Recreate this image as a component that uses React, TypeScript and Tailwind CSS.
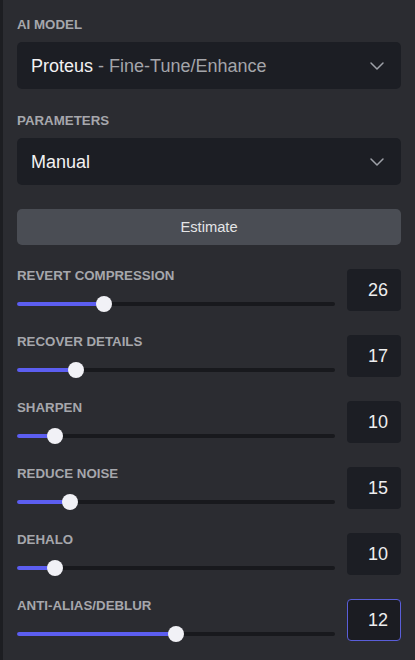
import { ChevronDown } from "lucide-react";

type Param = { label: string; value: number; pct: number; focused?: boolean };

const params: Param[] = [
  { label: "REVERT COMPRESSION", value: 26, pct: 26 },
  { label: "RECOVER DETAILS", value: 17, pct: 17 },
  { label: "SHARPEN", value: 10, pct: 10 },
  { label: "REDUCE NOISE", value: 15, pct: 15 },
  { label: "DEHALO", value: 10, pct: 10 },
  { label: "ANTI-ALIAS/DEBLUR", value: 12, pct: 50, focused: true },
];

function SectionLabel({ children }: { children: string }) {
  return (
    <div className="text-[13.3px] leading-[14px] font-bold text-[#a6a7ac]">{children}</div>
  );
}

function Select({ children }: { children: React.ReactNode }) {
  return (
    <div className="mt-[10px] h-[47px] rounded-[5px] bg-[#1c1e24] flex items-center pl-[14px] pr-[12px]">
      <div className="flex-1 text-[18px] leading-none">{children}</div>
      <ChevronDown size={24} strokeWidth={1.5} className="text-[#9ea1a8]" />
    </div>
  );
}

function SliderRow({ p }: { p: Param }) {
  const frac = p.pct / 100;
  return (
    <div className="flex gap-[12px] items-start h-[42px]">
      <div className="flex-1">
        <div className="text-[13.3px] leading-[14px] font-bold text-[#a6a7ac]">{p.label}</div>
        <div className="relative mt-[13px] h-4">
          <div className="absolute left-0 right-0 top-[6px] h-[4px] rounded-full bg-[#18191d]" />
          <div
            className="absolute left-0 top-[6px] h-[4px] rounded-full bg-[#5c5ef0]"
            style={{ width: `calc((100% - 16px) * ${frac} + 8px)` }}
          />
          <div
            className="absolute top-0 w-4 h-4 rounded-full bg-[#f1f1f6]"
            style={{ left: `calc((100% - 16px) * ${frac})` }}
          />
        </div>
      </div>
      <div
        className={
          p.focused
            ? "w-[54px] h-[42px] rounded-[4px] bg-[#1b1c22] border-[1.5px] border-[#5a5ed9] flex items-center justify-end pr-[12px] text-[18px] text-[#eeeeef]"
            : "w-[54px] h-[42px] rounded-[4px] bg-[#1c1e24] flex items-center justify-end pr-[13px] text-[18px] text-[#eeeeef]"
        }
      >
        {p.value}
      </div>
    </div>
  );
}

export default function App() {
  return (
    <div
      className="w-[415px] h-[660px] flex bg-[#2b2c31] overflow-hidden"
      style={{ fontFamily: '"Liberation Sans", Arial, sans-serif' }}
    >
      <div className="w-[3px] bg-[#1d1e22]" />
      <div className="flex-1 pl-[14px] pr-[14px] pt-[18px]">
        <SectionLabel>AI MODEL</SectionLabel>
        <Select>
          <span className="text-[#f2f2f3]">Proteus</span>
          <span className="text-[#a4a5aa]"> - Fine-Tune/Enhance</span>
        </Select>
        <div className="mt-[25px]">
          <SectionLabel>PARAMETERS</SectionLabel>
        </div>
        <Select>
          <span className="text-[#f2f2f3]">Manual</span>
        </Select>
        <div className="mt-[24px] h-[36px] rounded-[5px] bg-[#4a4d54] flex items-center justify-center text-[14.7px] text-[#e4e5e7]">
          Estimate
        </div>
        <div className="mt-[24px] flex flex-col gap-[24px]">
          {params.map((p) => (
            <SliderRow key={p.label} p={p} />
          ))}
        </div>
      </div>
    </div>
  );
}
